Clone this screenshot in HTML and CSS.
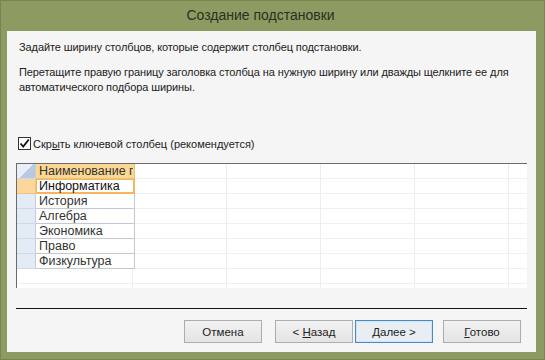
FILE: index.html
```html
<!DOCTYPE html>
<html lang="ru">
<head>
    <meta charset="UTF-8">
    <title>Создание подстановки</title>
    <link rel="stylesheet" href="styles.css">
</head>
<body>
    <div class="window">
        <div class="titlebar">Создание подстановки</div>

        <div class="content">
            <p class="intro">Задайте ширину столбцов, которые содержит столбец подстановки.</p>
            <p class="hint">Перетащите правую границу заголовка столбца на нужную ширину или дважды щелкните ее для автоматического подбора ширины.</p>

            <label class="check-row">
                <span class="checkbox">
                    <svg width="11" height="11" viewBox="0 0 11 11">
                        <path d="M1.5 5.5 L4.2 8.5 L9.8 1.5" fill="none" stroke="#111" stroke-width="1.8" />
                    </svg>
                </span>
                <span>Скр<u>ы</u>ть ключевой столбец (рекомендуется)</span>
            </label>

            <div class="grid">
                <table class="sheet">
                    <tr class="head">
                        <td class="sel sel-corner"></td>
                        <td class="cell"><div class="clip">Наименование предмета</div></td>
                    </tr>
                    <tr class="active">
                        <td class="sel"></td>
                        <td class="cell">Информатика</td>
                    </tr>
                    <tr><td class="sel"></td><td class="cell">История</td></tr>
                    <tr><td class="sel"></td><td class="cell">Алгебра</td></tr>
                    <tr><td class="sel"></td><td class="cell">Экономика</td></tr>
                    <tr><td class="sel"></td><td class="cell">Право</td></tr>
                    <tr><td class="sel"></td><td class="cell">Физкультура</td></tr>
                </table>
            </div>

            <div class="separator"></div>

            <div class="buttons">
                <button>Отмена</button>
                <button class="pair">&lt; <u>Н</u>азад</button>
                <button class="default"><u>Д</u>алее &gt;</button>
                <button class="last"><u>Г</u>отово</button>
            </div>
        </div>
    </div>
</body>
</html>
```

FILE: styles.css
```css
body {
    margin: 0;
    font-family: "Liberation Sans", Arial, sans-serif;
    font-size: 11px;
    color: #222;
    overflow: hidden;
}

.window {
    height: 360px;
    display: flex;
    flex-direction: column;
    background-color: #8b9b61;
    padding: 0 9px 8px 7px;
    box-sizing: border-box;
    box-shadow: inset 0 0 0 1px #76864e;
}

.titlebar {
    height: 31px;
    line-height: 31px;
    text-align: center;
    padding-right: 22px;
    font-size: 14px;
    color: #2b2f22;
}

.content {
    flex: 1;
    background-color: #f5f5f5;
    padding: 9px 9px 0 9px;
    display: flex;
    flex-direction: column;
}

.intro, .hint {
    margin: 0 0 0 3px;
    line-height: 15px;
    letter-spacing: -0.1px;
}

.hint {
    margin-top: 10px;
    padding-right: 6px;
}

.check-row {
    display: flex;
    align-items: center;
    gap: 2px;
    margin: 42px 0 0 2px;
    height: 13px;
}

.checkbox {
    width: 11px;
    height: 11px;
    border: 1px solid #333;
    background-color: #fff;
    display: flex;
}

.grid {
    margin-top: 13px;
    height: 124px;
    border-top: 1px solid #6b6b6b;
    border-left: 1px solid #6b6b6b;
    background-color: #fff;
    background-image:
        repeating-linear-gradient(to bottom, transparent 0 14px, #efefef 14px 15px),
        repeating-linear-gradient(to right, transparent 0 93px, #ededed 93px 94px);
    background-position: 0 0, 22px 0;
}

.sheet {
    border-collapse: collapse;
    font-size: 12.5px;
}

.sheet td {
    height: 14px;
    padding: 0;
    line-height: 14px;
}

.sel {
    width: 18px;
    background-color: #e3ebf6;
    border-right: 1px solid #c3cfe0;
    border-bottom: 1px solid #cfd9e7;
}

.sel-corner {
    background: linear-gradient(135deg, #e8eef8 0 50%, #b9c9e2 50% 100%);
}

.cell {
    width: 95px;
    max-width: 95px;
    padding: 0 0 0 3px !important;
    border-right: 1px solid #c3c9d3;
    border-bottom: 1px solid #c3c9d3;
    background-color: #fff;
    color: #333;
}

.head .cell {
    background-color: #fad893;
    border-color: #e8c37c;
}

.clip {
    overflow: hidden;
    white-space: nowrap;
    width: 94px;
}

.active .sel {
    background-color: #fcd79b;
    border-color: #f0c382;
}

.active .cell {
    box-shadow: inset 0 0 0 1px #f6b45f;
    border: 1px solid #f6b45f;
    color: #111;
}

.separator {
    margin-top: 20px;
    height: 1px;
    background-color: #111;
}

.buttons {
    margin-top: 11px;
    display: flex;
    justify-content: flex-end;
    padding-right: 6px;
}

button {
    width: 78px;
    height: 23px;
    margin-left: 13px;
    font-family: inherit;
    font-size: 11.5px;
    color: #222;
    background: linear-gradient(#f2f2f2, #e4e4e4);
    border: 1px solid #adadad;
    padding: 0;
}

button.default {
    margin-left: 2px;
    background: #e9eef4;
    border-color: #4a8bc4;
    box-shadow: inset 0 0 0 1px #cde4f7;
}

button.last {
    margin-left: 10px;
}
```
